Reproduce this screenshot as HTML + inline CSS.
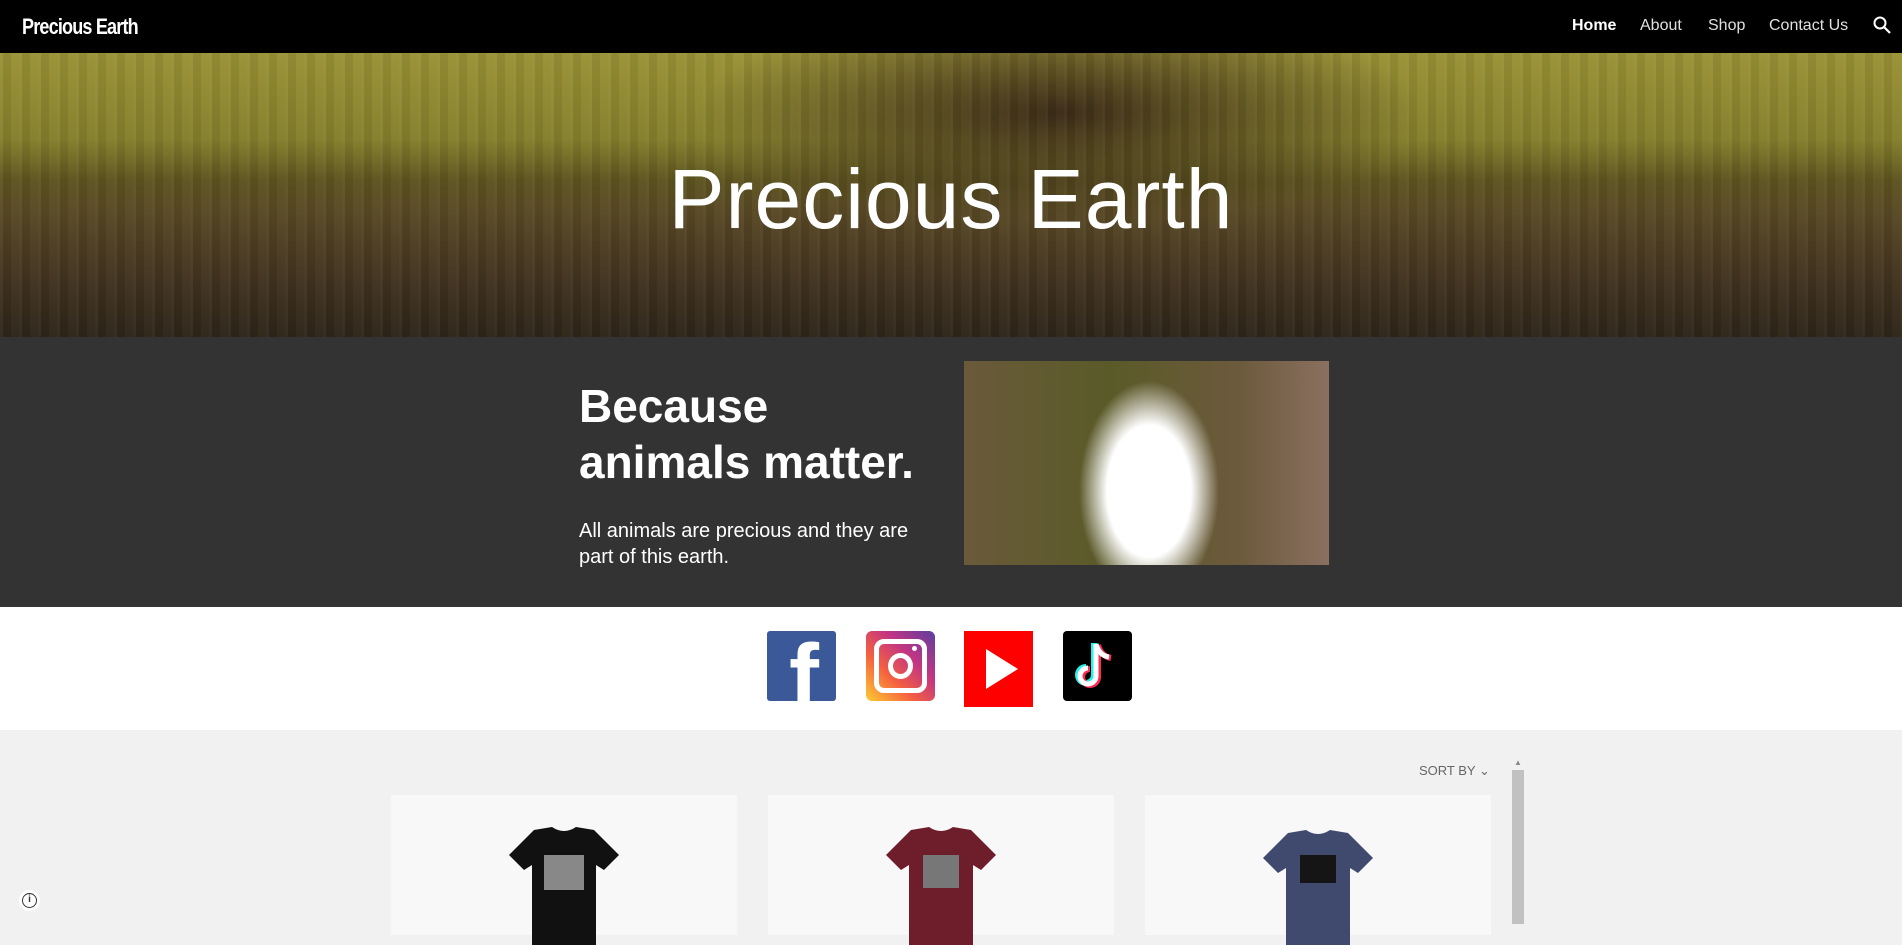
<!DOCTYPE html>
<html><head><meta charset="utf-8"><style>
*{margin:0;padding:0;box-sizing:border-box}
body{width:1902px;height:924px;overflow:hidden;font-family:"Liberation Sans",sans-serif;background:#f1f1f1;position:relative}
.hdr{position:absolute;left:0;top:0;width:1902px;height:53px;background:#000}
.logo{position:absolute;left:22px;top:14px;color:#fff;font-weight:bold;font-size:22px;letter-spacing:-1px;transform:scaleX(.82);transform-origin:left}
.nav{position:absolute;top:17px;color:#e0e0e0;font-size:16px}
.hero{position:absolute;left:0;top:53px;width:1902px;height:284px;overflow:hidden;
background:
radial-gradient(ellipse 360px 110px at 1060px 60px,rgba(55,38,22,.95),rgba(55,38,22,0) 100%),
linear-gradient(180deg,#9a9236 0%,#85802c 30%,#5d5420 45%,#5a4a25 55%,#4b3b22 70%,#3c2f1e 85%,#2e251a 100%);}
.hero:after{content:"";position:absolute;inset:0;background:repeating-linear-gradient(90deg,rgba(255,255,255,.04) 0 3px,rgba(0,0,0,.06) 3px 11px,rgba(255,255,255,.02) 11px 19px)}
.ht{position:absolute;left:0;width:1902px;top:98px;text-align:center;color:#fff;font-size:84px;font-weight:300;letter-spacing:1px;z-index:2}
.dark{position:absolute;left:0;top:337px;width:1902px;height:270px;background:#333}
.h2{position:absolute;left:579px;top:378px;color:#fff;font-weight:bold;font-size:46px;line-height:56px}
.p{position:absolute;left:579px;top:518px;color:#fff;font-size:20px;line-height:26px}
.img{position:absolute;left:964px;top:361px;width:365px;height:204px;
background:radial-gradient(ellipse 70px 110px at 185px 130px,#fff 0 60%,rgba(255,255,255,0) 100%),linear-gradient(90deg,#6a5a3a,#5a5a28 40%,#6c5a3c 75%,#8a7060)}
.white{position:absolute;left:0;top:607px;width:1902px;height:123px;background:#fff}
.ic{position:absolute;top:631px;width:69px;height:70px;border-radius:3px}
.card{position:absolute;top:795px;width:346px;height:140px;background:#f8f8f8}
.shirt{position:absolute;top:30px;left:103px;width:140px;height:120px}
</style></head><body>
<div class="hdr">
<div class="logo">Precious Earth</div>
<div class="nav" style="left:1572px;color:#fff;font-weight:bold">Home</div>
<div class="nav" style="left:1640px">About</div>
<div class="nav" style="left:1708px">Shop</div>
<div class="nav" style="left:1769px">Contact Us</div>
<svg style="position:absolute;left:1872px;top:15px" width="20" height="20" viewBox="0 0 20 20"><circle cx="8" cy="8" r="5.5" stroke="#fff" stroke-width="2" fill="none"/><path d="M12 12l6 6" stroke="#fff" stroke-width="2.2"/></svg>
</div>
<div class="hero"><div class="ht">Precious Earth</div></div>
<div class="dark"></div>
<div class="h2">Because<br>animals matter.</div>
<div class="p">All animals are precious and they are<br>part of this earth.</div>
<div class="img"></div>
<div class="white"></div>
<div class="ic" style="left:767px;background:#3b5998;overflow:hidden"><div style="position:absolute;left:22px;top:6px;color:#fff;font-weight:bold;font-size:90px;line-height:80px">f</div></div>
<div class="ic" style="left:866px;background:linear-gradient(45deg,#fccc33 0%,#f56040 35%,#c13584 65%,#5b3fa0 100%);border-radius:6px"><div style="position:absolute;left:8px;top:8px;width:53px;height:54px;border:5px solid #fff;border-radius:10px"></div><div style="position:absolute;left:22px;top:22px;width:25px;height:26px;border:5px solid #fff;border-radius:50%"></div><div style="position:absolute;left:46px;top:15px;width:5px;height:5px;background:#fff;border-radius:50%"></div></div>
<div class="ic" style="left:964px;background:#f00;height:76px;border-radius:0"><div style="position:absolute;left:22px;top:18px;border-left:32px solid #fff;border-top:20px solid transparent;border-bottom:20px solid transparent"></div></div>
<div class="ic" style="left:1063px;background:#000;border-radius:4px"><svg width="69" height="70" viewBox="0 0 69 70"><path d="M33 13v32a8 8 0 1 1-8-8" stroke="#25f4ee" stroke-width="6" fill="none" transform="translate(-2,-1)"/><path d="M33 13v32a8 8 0 1 1-8-8M33 13c2 8 7 12 13 13" stroke="#fe2c55" stroke-width="6" fill="none" transform="translate(2,1)"/><path d="M33 13v32a8 8 0 1 1-8-8M33 13c2 8 7 12 13 13" stroke="#fff" stroke-width="5" fill="none"/></svg></div>
<div style="position:absolute;left:1419px;top:763px;color:#666;font-size:13px">SORT BY ⌄</div>
<div style="position:absolute;left:1512px;top:770px;width:12px;height:154px;background:#c1c1c1"></div>
<div style="position:absolute;left:1514px;top:758px;color:#888;font-size:8px">▲</div>
<div class="card" style="left:391px"><svg class="shirt" viewBox="0 0 140 120"><path d="M40 5l18-3q12 8 24 0l18 3 25 25-15 15-8-5v85H38V40l-8 5-15-15z" fill="#111"/><rect x="50" y="30" width="40" height="35" fill="#888"/></svg></div>
<div class="card" style="left:768px"><svg class="shirt" viewBox="0 0 140 120"><path d="M40 5l18-3q12 8 24 0l18 3 25 25-15 15-8-5v85H38V40l-8 5-15-15z" fill="#6e1d2a"/><rect x="52" y="30" width="36" height="33" fill="#777"/></svg></div>
<div class="card" style="left:1145px"><svg class="shirt" viewBox="0 0 140 120"><path d="M40 8l18-3q12 8 24 0l18 3 25 25-15 15-8-5v85H38V43l-8 5-15-15z" fill="#3f4a6e"/><rect x="52" y="30" width="36" height="28" fill="#151515"/></svg></div>
<div style="position:absolute;left:19px;top:890px;width:21px;height:21px;border-radius:50%;background:#fff;display:flex;align-items:center;justify-content:center"><div style="width:15px;height:15px;border:1.5px solid #333;border-radius:50%;font-size:10px;font-weight:bold;text-align:center;line-height:12px;color:#333">i</div></div>
</body></html>
